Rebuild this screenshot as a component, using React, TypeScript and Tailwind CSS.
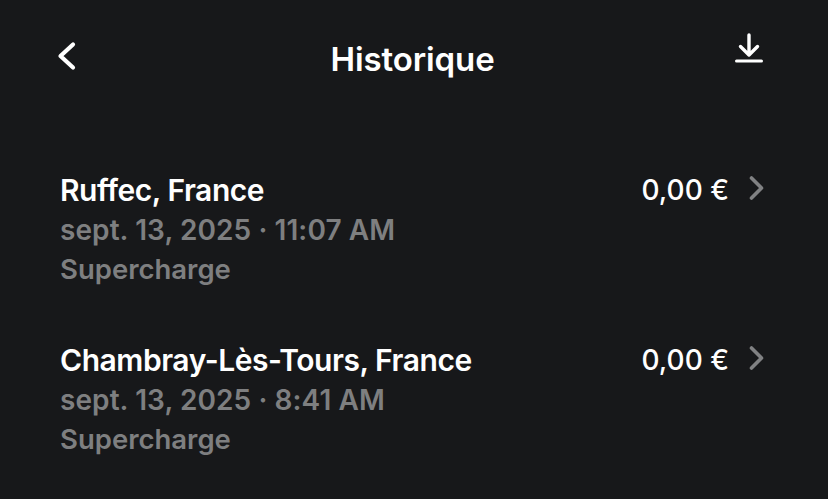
const trips = [
  { place: "Ruffec, France", date: "sept. 13, 2025 · 11:07 AM", kind: "Supercharge", cost: "0,00 €" },
  { place: "Chambray-Lès-Tours, France", date: "sept. 13, 2025 · 8:41 AM", kind: "Supercharge", cost: "0,00 €" },
];

export default function App() {
  return (
    <div className="h-[499px] w-[828px] overflow-hidden bg-[#17181a] font-['Inter',sans-serif] text-white">
      {/* Header */}
      <div className="flex h-[136px] items-start justify-between pl-[54px] pr-[64px] pt-[33px]">
        <svg width="26" height="46" viewBox="0 0 26 46" fill="none">
          <path d="M19 11.5 6.5 23 19 34.5" stroke="#fff" strokeWidth="4.2" strokeLinecap="round" strokeLinejoin="round" />
        </svg>
        <h1 className="ml-[11px] mt-[4px] text-[33px] font-semibold leading-[44px] tracking-[-0.1px]">Historique</h1>
        <svg width="30" height="30" viewBox="0 0 30 30" fill="none">
          <path d="M15 2v20M6.5 13.5 15 22l8.5-8.5" stroke="#fff" strokeWidth="3.4" strokeLinecap="round" strokeLinejoin="round" />
          <path d="M2.5 28h25" stroke="#fff" strokeWidth="3" strokeLinecap="round" />
        </svg>
      </div>

      {/* Charging history */}
      <div className="flex flex-col gap-[30px] pl-[60px] pr-[64px] pt-[34px]">
        {trips.map((t) => (
          <div key={t.place} className="flex h-[140px] items-start justify-between">
            <div>
              <div className="text-[30px] font-semibold leading-[40px] tracking-[-0.45px]">{t.place}</div>
              <div className="text-[28px] font-semibold leading-[40px] tracking-[0.08px] text-[#7e7f80]">{t.date}</div>
              <div className="text-[27.5px] font-semibold leading-[38px] text-[#7e7f80]">{t.kind}</div>
            </div>
            <div className="flex items-center gap-[19px]">
              <span className="text-[28px] font-medium leading-[40px]">{t.cost}</span>
              <svg width="16" height="26" viewBox="0 0 16 26" fill="none" className="-mt-[4px]">
                <path d="M3.5 3l10 10-10 10" stroke="#808183" strokeWidth="3.6" strokeLinecap="round" strokeLinejoin="round" />
              </svg>
            </div>
          </div>
        ))}
      </div>
    </div>
  );
}
